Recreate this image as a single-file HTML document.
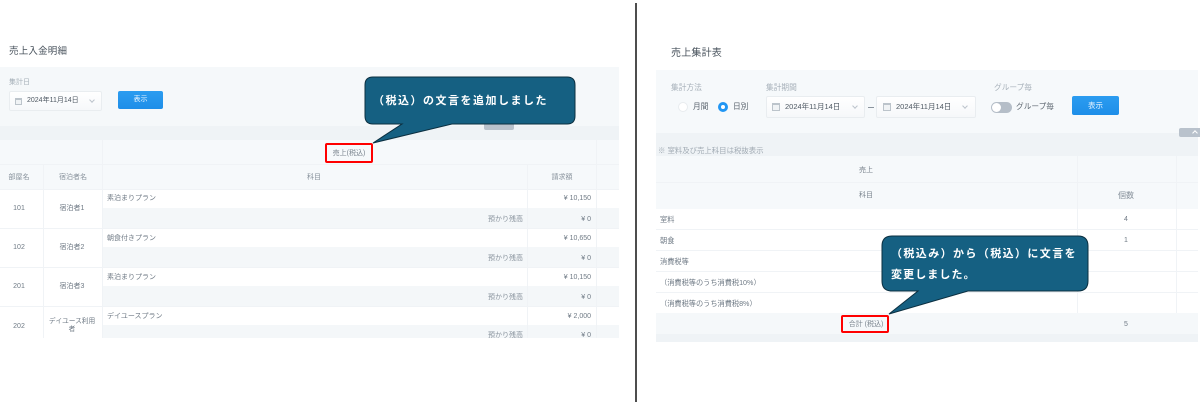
<!DOCTYPE html>
<html lang="ja"><head><meta charset="utf-8"><style>
html,body{margin:0;padding:0;background:#fff}
#p{position:relative;width:1200px;height:404px;overflow:hidden;background:#fff;font-family:"Liberation Sans","Noto Sans CJK JP",sans-serif;color:#6f7a85;font-size:7px}
#p div{position:absolute;box-sizing:border-box}
.t{white-space:nowrap;line-height:12px;filter:blur(.3px)}
.c{transform:translateX(-50%)}
.r{transform:translateX(-100%)}
.sel{background:linear-gradient(#fff,#f6f8fa);border:1px solid #e9edf0;border-radius:2px}
.btn{background:linear-gradient(#2b9cf0,#1e8ee8);border-radius:2px;color:#e8f4ff;text-align:center}
.ln{background:#f0f3f6}
.g{background:#f4f7f9}
.h{background:#f6f9fb}
.cal{width:7px;height:7px;border:1px solid #bcc4cb;border-top-width:2px;background:#f0f3f5}
.chev{width:4px;height:4px;border-right:1px solid #bcc4cc;border-bottom:1px solid #bcc4cc;transform:rotate(45deg)}
.up{width:4px;height:4px;border-left:1px solid #fff;border-top:1px solid #fff;transform:rotate(45deg)}
.cb{font-size:11px;line-height:14px;letter-spacing:1.4px;color:#fff;font-weight:bold}
</style></head><body><div id="p">

<!-- left -->
<div class="t" style="left:9px;top:46px;font-size:9.5px;letter-spacing:.2px;color:#47515b">売上入金明細</div>
<div style="left:0;top:67px;width:619px;height:59px;background:#f5f8fa"></div>
<div class="t" style="left:9px;top:77px;color:#a5afb8">集計日</div>
<div class="sel" style="left:9px;top:91px;width:93px;height:20px"></div>
<div class="cal" style="left:15px;top:98px"></div>
<div class="t" style="left:27px;top:95px;color:#4f5963">2024年11月14日</div>
<div class="chev" style="left:90px;top:98px"></div>
<div class="btn t" style="left:118px;top:91px;width:45px;height:18px;line-height:18px">表示</div>
<div style="left:0;top:126px;width:619px;height:14px;background:#eff3f6"></div>
<div style="left:484px;top:124px;width:30px;height:6px;background:#b9c2cc;border-radius:0 0 2px 2px"></div>
<div class="h" style="left:0;top:140px;width:619px;height:49px"></div>
<div class="ln" style="left:0;top:164px;width:619px;height:1px"></div>
<div class="t c" style="left:349px;top:148px;color:#7a848e">売上(税込)</div>
<div class="t c" style="left:19px;top:172px;color:#87919b">部屋名</div>
<div class="t c" style="left:73px;top:172px;color:#87919b">宿泊者名</div>
<div class="t c" style="left:314px;top:172px;color:#87919b">科目</div>
<div class="t c" style="left:562px;top:172px;color:#87919b">請求額</div>

<div class="g" style="left:102px;top:208px;width:517px;height:20px"></div>
<div class="g" style="left:102px;top:247px;width:517px;height:20px"></div>
<div class="g" style="left:102px;top:286px;width:517px;height:20px"></div>
<div class="g" style="left:102px;top:325px;width:517px;height:13px"></div>
<div class="ln" style="left:0;top:189px;width:619px;height:1px"></div>
<div class="ln" style="left:0;top:228px;width:619px;height:1px"></div>
<div class="ln" style="left:0;top:267px;width:619px;height:1px"></div>
<div class="ln" style="left:0;top:306px;width:619px;height:1px"></div>
<div class="ln" style="left:43px;top:164px;width:1px;height:174px"></div>
<div class="ln" style="left:102px;top:140px;width:1px;height:198px"></div>
<div class="ln" style="left:527px;top:164px;width:1px;height:174px"></div>
<div class="ln" style="left:596px;top:140px;width:1px;height:198px"></div>

<div class="t c" style="left:19px;top:203px">101</div>
<div class="t c" style="left:72px;top:203px">宿泊者1</div>
<div class="t" style="left:107px;top:193px">素泊まりプラン</div>
<div class="t r" style="left:523px;top:214px;color:#8a949e">預かり残高</div>
<div class="t r" style="left:591px;top:193px">¥ 10,150</div>
<div class="t r" style="left:591px;top:214px">¥ 0</div>

<div class="t c" style="left:19px;top:242px">102</div>
<div class="t c" style="left:72px;top:242px">宿泊者2</div>
<div class="t" style="left:107px;top:233px">朝食付きプラン</div>
<div class="t r" style="left:523px;top:253px;color:#8a949e">預かり残高</div>
<div class="t r" style="left:591px;top:233px">¥ 10,650</div>
<div class="t r" style="left:591px;top:253px">¥ 0</div>

<div class="t c" style="left:19px;top:281px">201</div>
<div class="t c" style="left:72px;top:281px">宿泊者3</div>
<div class="t" style="left:107px;top:272px">素泊まりプラン</div>
<div class="t r" style="left:523px;top:292px;color:#8a949e">預かり残高</div>
<div class="t r" style="left:591px;top:272px">¥ 10,150</div>
<div class="t r" style="left:591px;top:292px">¥ 0</div>

<div class="t c" style="left:19px;top:321px">202</div>
<div class="t c" style="left:72px;top:318px;line-height:8px;text-align:center;white-space:normal;width:52px;font-size:6.7px">デイユース利用者</div>
<div class="t" style="left:107px;top:311px">デイユースプラン</div>
<div class="t r" style="left:591px;top:311px">¥ 2,000</div>
<div style="left:470px;top:330px;width:130px;height:8px;overflow:hidden"><div class="t" style="left:0;top:0;width:53px;text-align:right;color:#8a949e">預かり残高</div><div class="t" style="left:110px;top:0;width:11px;text-align:right">¥ 0</div></div>

<div style="left:635px;top:3px;width:2px;height:399px;background:#4d4d4d"></div>

<!-- right -->
<div class="t" style="left:671px;top:48px;font-size:10px;letter-spacing:.2px;color:#47515b">売上集計表</div>
<div style="left:656px;top:70px;width:542px;height:63px;background:#f6f9fb"></div>
<div class="t" style="left:671px;top:82px;font-size:7.7px;color:#a5afb8">集計方法</div>
<div class="t" style="left:766px;top:82px;font-size:7.7px;color:#a5afb8">集計期間</div>
<div class="t" style="left:994px;top:82px;font-size:7.7px;color:#a5afb8">グループ毎</div>
<div style="left:678px;top:102px;width:10px;height:10px;border-radius:50%;background:#fff;border:1px solid #e8ecef"></div>
<div class="t" style="left:693px;top:101px;font-size:7.7px;color:#5a646e">月間</div>
<div style="left:718px;top:102px;width:10px;height:10px;border-radius:50%;background:#fff;border:3px solid #2196f3"></div>
<div class="t" style="left:733px;top:101px;font-size:7.7px;color:#5a646e">日別</div>
<div class="sel" style="left:766px;top:96px;width:99px;height:22px"></div>
<div class="cal" style="left:772px;top:103px;width:8px;height:8px"></div>
<div class="t" style="left:785px;top:101px;font-size:7.5px;color:#4f5963">2024年11月14日</div>
<div class="chev" style="left:853px;top:104px"></div>
<div style="left:868px;top:107px;width:6px;height:1px;background:#8a949e"></div>
<div class="sel" style="left:876px;top:96px;width:100px;height:22px"></div>
<div class="cal" style="left:883px;top:103px;width:8px;height:8px"></div>
<div class="t" style="left:896px;top:101px;font-size:7.5px;color:#4f5963">2024年11月14日</div>
<div class="chev" style="left:963px;top:104px"></div>
<div style="left:991px;top:102px;width:21px;height:11px;border-radius:6px;background:#b5bec8"></div>
<div style="left:992px;top:103px;width:9px;height:9px;border-radius:50%;background:#fff"></div>
<div class="t" style="left:1016px;top:101px;font-size:7.7px;color:#5a646e">グループ毎</div>
<div class="btn t" style="left:1072px;top:96px;width:47px;height:19px;line-height:19px;font-size:7.5px">表示</div>
<div style="left:656px;top:133px;width:542px;height:23px;background:#eff3f6"></div>
<div style="left:1179px;top:128px;width:21px;height:9px;background:#b9c2cc;border-radius:2px 0 0 2px"></div>
<div class="up" style="left:1193px;top:131px"></div>
<div class="t" style="left:658px;top:145px;font-size:7.4px;color:#a0aab3">※ 室料及び売上科目は税抜表示</div>
<div class="h" style="left:656px;top:156px;width:542px;height:53px"></div>
<div class="ln" style="left:656px;top:182px;width:542px;height:1px"></div>
<div class="t c" style="left:866px;top:165px;color:#7a848e">売上</div>
<div class="t c" style="left:866px;top:190px;color:#7a848e">科目</div>
<div class="t c" style="left:1126px;top:190px;font-size:8px;color:#87919b">個数</div>

<div class="ln" style="left:656px;top:229px;width:542px;height:1px"></div>
<div class="ln" style="left:656px;top:250px;width:542px;height:1px"></div>
<div class="ln" style="left:656px;top:271px;width:542px;height:1px"></div>
<div class="ln" style="left:656px;top:292px;width:542px;height:1px"></div>
<div class="ln" style="left:1077px;top:156px;width:1px;height:157px"></div>
<div class="ln" style="left:1176px;top:156px;width:1px;height:157px"></div>
<div class="t" style="left:660px;top:214px;font-size:7.2px">室料</div>
<div class="t" style="left:660px;top:235px;font-size:7.2px">朝食</div>
<div class="t" style="left:660px;top:256px;font-size:7.2px">消費税等</div>
<div class="t" style="left:660px;top:277px;font-size:7.2px">（消費税等のうち消費税10%）</div>
<div class="t" style="left:660px;top:298px;font-size:7.2px">（消費税等のうち消費税8%）</div>
<div class="t c" style="left:1126px;top:214px">4</div>
<div class="t c" style="left:1126px;top:235px">1</div>
<div style="left:656px;top:313px;width:542px;height:21px;background:#f5f8fa"></div>
<div style="left:656px;top:334px;width:542px;height:8px;background:#eff3f6"></div>
<div class="t c" style="left:866px;top:319px;color:#7a848e">合計 (税込)</div>
<div class="t c" style="left:1126px;top:319px">5</div>

<!-- annotations -->
<div style="left:325px;top:143px;width:48px;height:20px;border:2px solid #f00;border-radius:2px"></div>
<div style="left:841px;top:315px;width:48px;height:18px;border:2px solid #f00;border-radius:2px"></div>
<svg style="position:absolute;left:0;top:0" width="1200" height="404">
<path d="M373 143 L402 124 L373 124 Q365 124 365 116 L365 85 Q365 77 373 77 L567 77 Q575 77 575 85 L575 116 Q575 124 567 124 L452 124 Z" fill="#156082" stroke="#0b2f40" stroke-width="1"/>
<path d="M889 314 L918 291 L892 291 Q882 291 882 281 L882 246 Q882 236 892 236 L1078 236 Q1088 236 1088 246 L1088 281 Q1088 291 1078 291 L968 291 Z" fill="#156082" stroke="#0b2f40" stroke-width="1"/>
</svg>
<div class="t cb" style="left:373px;top:94px;letter-spacing:1.5px">（税込）の文言を追加しました</div>
<div class="t cb" style="left:891px;top:247px">（税込み）から（税込）に文言を</div>
<div class="t cb" style="left:891px;top:268px;letter-spacing:1.1px">変更しました。</div>
</div></body></html>
